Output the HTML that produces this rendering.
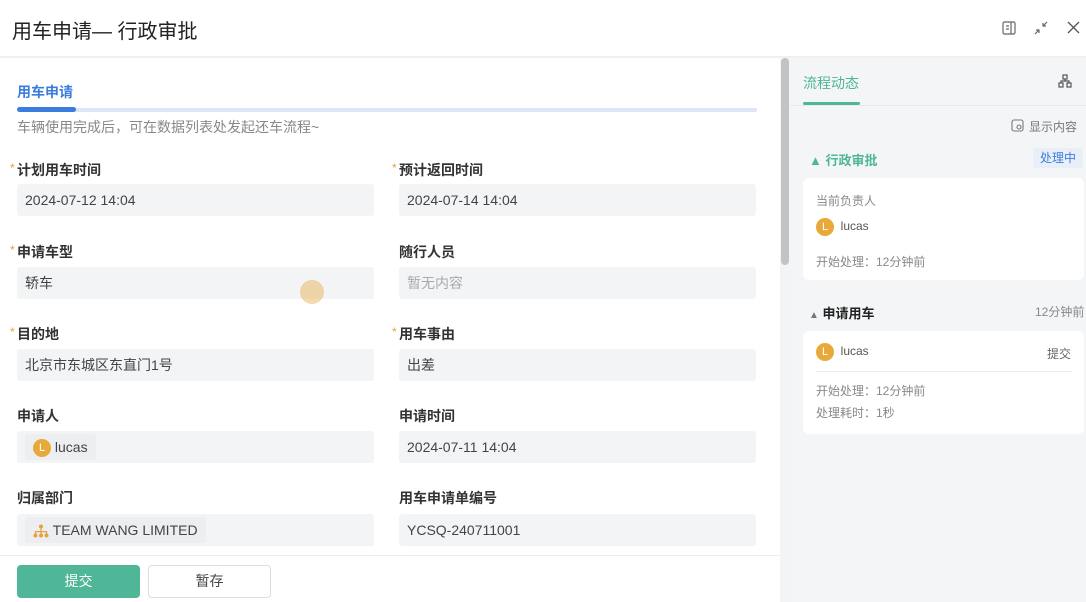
<!DOCTYPE html>
<html><head><meta charset="utf-8"><style>
*{margin:0;padding:0;box-sizing:border-box}
body{width:1086px;height:602px;overflow:hidden;background:#fff;font-family:"Liberation Sans","Noto Sans CJK SC",sans-serif;position:relative;color:#333}
.a{position:absolute}
.lbl{position:absolute;font-size:14px;font-weight:bold;color:#333;line-height:20px}
.lbl i{color:#e8a23a;font-style:normal;font-weight:normal;position:absolute;left:-7px;top:-2px;font-size:12px}
.inp{position:absolute;height:32px;width:357px;background:#f3f4f6;border-radius:3px;font-size:14px;line-height:32px;padding-left:8px;color:#444}
.av{display:inline-block;width:18px;height:18px;border-radius:50%;background:#e8a93a;color:#fff;font-size:11px;line-height:18px;text-align:center;vertical-align:middle}
.tag{position:absolute;left:8px;top:3px;height:26px;line-height:26px;background:#eceef1;border-radius:3px;padding:0 8px}
.card{position:absolute;left:803px;width:281px;background:#fff;border-radius:6px}
</style></head><body>
<div class="a" style="left:12px;top:15px;font-size:20px;color:#222">用车申请— 行政审批</div>
<svg class="a" style="left:1002px;top:21px" width="14" height="14" viewBox="0 0 14 14" fill="none" stroke="#666" stroke-width="1.2"><rect x="1" y="1" width="12" height="12" rx="1.5"/><path d="M9 1v12M4 5h3M4 8h3"/></svg>
<svg class="a" style="left:1034px;top:21px" width="14" height="14" viewBox="0 0 14 14" fill="none" stroke="#666" stroke-width="1.2"><path d="M1 13l4-4M2 9h3v3M13 1l-4 4M9 2v3h3"/></svg>
<svg class="a" style="left:1067px;top:21px" width="13" height="13" viewBox="0 0 13 13" stroke="#555" stroke-width="1.3"><path d="M1 1l11 11M12 1L1 12"/></svg>
<div class="a" style="left:0;top:56px;width:1086px;height:2px;background:#eef0f2"></div>

<div class="a" style="left:17px;top:82px;font-size:14px;font-weight:bold;color:#3b7ddd">用车申请</div>
<div class="a" style="left:17px;top:108px;width:740px;height:4px;background:#dde6f7;border-radius:2px"></div>
<div class="a" style="left:17px;top:107px;width:59px;height:5px;background:#3b7ddd;border-radius:3px"></div>
<div class="a" style="left:17px;top:117px;font-size:14px;color:#888">车辆使用完成后，可在数据列表处发起还车流程~</div>

<div class="lbl" style="left:17px;top:160px"><i>*</i>计划用车时间</div>
<div class="inp" style="left:17px;top:184px">2024-07-12 14:04</div>
<div class="lbl" style="left:399px;top:160px"><i>*</i>预计返回时间</div>
<div class="inp" style="left:399px;top:184px">2024-07-14 14:04</div>

<div class="lbl" style="left:17px;top:242px"><i>*</i>申请车型</div>
<div class="inp" style="left:17px;top:267px">轿车</div>
<div class="lbl" style="left:399px;top:242px">随行人员</div>
<div class="inp" style="left:399px;top:267px;color:#aaa">暂无内容</div>

<div class="lbl" style="left:17px;top:324px"><i>*</i>目的地</div>
<div class="inp" style="left:17px;top:349px">北京市东城区东直门1号</div>
<div class="lbl" style="left:399px;top:324px"><i>*</i>用车事由</div>
<div class="inp" style="left:399px;top:349px">出差</div>

<div class="lbl" style="left:17px;top:406px">申请人</div>
<div class="inp" style="left:17px;top:431px"><span class="tag"><span class="av">L</span> lucas</span></div>
<div class="lbl" style="left:399px;top:406px">申请时间</div>
<div class="inp" style="left:399px;top:431px">2024-07-11 14:04</div>

<div class="lbl" style="left:17px;top:488px">归属部门</div>
<div class="inp" style="left:17px;top:514px"><span class="tag"><svg width="16" height="14" viewBox="0 0 16 14" style="vertical-align:middle" fill="#e8a23a"><circle cx="8" cy="2.5" r="2"/><circle cx="2.5" cy="11.5" r="2"/><circle cx="8" cy="11.5" r="2"/><circle cx="13.5" cy="11.5" r="2"/><path d="M7.4 4h1.2v3h5.5v3h-1.2V8.2H8.6V10H7.4V8.2H3.1V10H1.9V7h5.5z"/></svg> TEAM WANG LIMITED</span></div>
<div class="lbl" style="left:399px;top:488px">用车申请单编号</div>
<div class="inp" style="left:399px;top:514px">YCSQ-240711001</div>

<div class="a" style="left:300px;top:280px;width:24px;height:24px;border-radius:50%;background:rgba(232,180,90,.5)"></div>

<div class="a" style="left:0;top:555px;width:790px;height:47px;background:#fff;border-top:1px solid #eee"></div>
<div class="a" style="left:17px;top:565px;width:123px;height:33px;background:#4fb697;border-radius:4px;color:#fff;font-size:14px;text-align:center;line-height:33px">提交</div>
<div class="a" style="left:148px;top:565px;width:123px;height:33px;border:1px solid #ddd;border-radius:4px;font-size:14px;text-align:center;line-height:31px;color:#444">暂存</div>

<div class="a" style="left:780px;top:58px;width:10px;height:544px;background:#f4f4f4"></div>
<div class="a" style="left:781px;top:58px;width:8px;height:207px;background:#c2c3c6;border-radius:4px"></div>

<div class="a" style="left:790px;top:58px;width:296px;height:544px;background:#f4f5f7"></div>
<div class="a" style="left:803px;top:73px;font-size:14px;color:#4fb697">流程动态</div>
<div class="a" style="left:803px;top:102px;width:57px;height:3px;background:#4fb697;border-radius:2px"></div>
<div class="a" style="left:790px;top:105px;width:296px;height:1px;background:#e8eaed"></div>
<svg class="a" style="left:1058px;top:74px" width="14" height="14" viewBox="0 0 14 14" fill="none" stroke="#555" stroke-width="1.2"><rect x="5" y="1" width="4" height="4"/><rect x="1" y="9" width="4" height="4"/><rect x="9" y="9" width="4" height="4"/><path d="M7 5v2M3 9V7h8v2"/></svg>
<svg class="a" style="left:1011px;top:119px" width="13" height="13" viewBox="0 0 13 13" fill="none" stroke="#777" stroke-width="1.1"><rect x="1" y="1" width="11" height="11" rx="2"/><circle cx="8" cy="8" r="2"/></svg>
<div class="a" style="left:1029px;top:118px;font-size:12px;color:#777">显示内容</div>

<div class="a" style="left:809px;top:150px;font-size:13px;font-weight:bold;color:#4fb697">▲ 行政审批</div>
<div class="a" style="left:1033px;top:148px;width:50px;height:20px;background:#e9eff9;border-radius:3px;font-size:12px;color:#3b7ddd;text-align:center;line-height:20px">处理中</div>
<div class="card" style="top:178px;height:102px">
 <div class="a" style="left:13px;top:14px;font-size:12px;color:#888">当前负责人</div>
 <div class="a" style="left:13px;top:40px;font-size:12px;color:#555"><span class="av">L</span>&nbsp; lucas</div>
 <div class="a" style="left:13px;top:75px;font-size:12px;color:#888">开始处理：12分钟前</div>
</div>
<div class="a" style="left:809px;top:303px;font-size:13px;font-weight:bold;color:#222"><span style="color:#777;font-size:10px">▲</span> 申请用车</div>
<div class="a" style="left:1035px;top:303px;font-size:12px;color:#888">12分钟前</div>
<div class="card" style="top:331px;height:103px">
 <div class="a" style="left:13px;top:12px;font-size:12px;color:#555"><span class="av">L</span>&nbsp; lucas</div>
 <div class="a" style="left:244px;top:14px;font-size:12px;color:#666">提交</div>
 <div class="a" style="left:13px;top:40px;width:256px;height:1px;background:#eee"></div>
 <div class="a" style="left:13px;top:51px;font-size:12px;color:#888">开始处理：12分钟前</div>
 <div class="a" style="left:13px;top:73px;font-size:12px;color:#888">处理耗时：1秒</div>
</div>
</body></html>
